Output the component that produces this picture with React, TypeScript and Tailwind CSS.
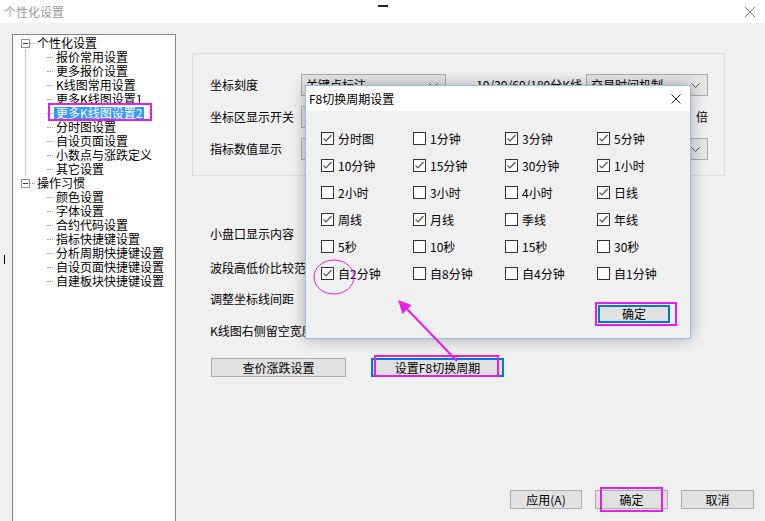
import React from "react";

const tree1 = ["报价常用设置", "更多报价设置", "K线图常用设置", "更多K线图设置1", "更多K线图设置2", "分时图设置", "自设页面设置", "小数点与涨跌定义", "其它设置"];
const tree2 = ["颜色设置", "字体设置", "合约代码设置", "指标快捷键设置", "分析周期快捷键设置", "自设页面快捷键设置", "自建板块快捷键设置"];

const periods: [string, boolean][] = [
  ["分时图", true], ["1分钟", false], ["3分钟", true], ["5分钟", true],
  ["10分钟", true], ["15分钟", true], ["30分钟", true], ["1小时", true],
  ["2小时", false], ["3小时", false], ["4小时", false], ["日线", true],
  ["周线", true], ["月线", true], ["季线", false], ["年线", true],
  ["5秒", false], ["10秒", false], ["15秒", false], ["30秒", false],
  ["自2分钟", true], ["自8分钟", false], ["自4分钟", false], ["自1分钟", false],
];

function Chevron() {
  return (
    <svg width="9" height="5" viewBox="0 0 9 5" className="shrink-0">
      <polyline points="0.5,0.5 4.5,4.5 8.5,0.5" fill="none" stroke="#555" strokeWidth="1" />
    </svg>
  );
}

function Combo({ text, className }: { text?: string; className: string }) {
  return (
    <div className={`h-[22px] bg-[#e5e5e5] border border-[#acacac] flex items-center justify-between pl-[4px] pr-[7px] ${className}`}>
      <span>{text}</span>
      <Chevron />
    </div>
  );
}

function Check({ on }: { on: boolean }) {
  return (
    <span className="w-[13px] h-[13px] border border-[#333] bg-white flex items-center justify-center shrink-0">
      {on && (
        <svg width="11" height="11" viewBox="0 0 11 11">
          <polyline points="1.5,5.5 4,8 9.5,2" fill="none" stroke="#555" strokeWidth="1.2" />
        </svg>
      )}
    </span>
  );
}

function TreeGroup({ label, items, last }: { label: string; items: string[]; last?: boolean }) {
  return (
    <div>
      <div className="flex items-center h-[14px]">
        <span className="ml-[8px] w-[9px] h-[9px] border border-[#919191] bg-white flex items-center justify-center">
          <span className="w-[5px] h-px bg-[#333]" />
        </span>
        <span className="w-[5px] border-t border-dotted border-[#999]" />
        <span className="ml-[2px]">{label}</span>
      </div>
      <div className={`ml-[12px] border-l border-dotted ${last ? "border-transparent" : "border-[#a0a0a0]"}`}>
        {items.map((t) => (
          <div key={t} className="flex items-center h-[14px]">
            <span className="ml-[21px] w-[6px] border-t border-dotted border-[#999]" />
            {t === "更多K线图设置2" ? (
              <span className="ml-[1px] px-[2px] h-[12px] leading-[12px] bg-[#3399ff] text-white">{t}</span>
            ) : (
              <span className="ml-[3px]">{t}</span>
            )}
          </div>
        ))}
      </div>
    </div>
  );
}

function Btn({ children, className }: { children: React.ReactNode; className: string }) {
  return (
    <div className={`h-[19px] bg-[#e1e1e1] flex items-center justify-center ${className}`}>{children}</div>
  );
}

export default function App() {
  return (
    <div className="w-[765px] h-[521px] relative overflow-hidden bg-[#f0f0f0] text-[12px] leading-[14px] text-black font-['Noto_Sans_CJK_SC','Noto_Sans',sans-serif]">
      {/* title bar */}
      <div className="h-[23px] bg-white flex items-center justify-between pl-[4px] pr-[9px]">
        <span className="text-[#9a9a9a]">个性化设置</span>
        <svg width="12" height="12" viewBox="0 0 12 12">
          <path d="M1 1L11 11M11 1L1 11" stroke="#777" strokeWidth="1" />
        </svg>
      </div>
      <span className="absolute left-[378px] top-[5px] w-[10px] h-[2px] bg-[#222]" />

      <div className="flex h-[498px] pt-[11px] pl-[12px]">
        {/* tree */}
        <div className="w-[164px] h-[495px] shrink-0 bg-white border border-[#828790] pt-[1px]">
          <TreeGroup label="个性化设置" items={tree1} />
          <TreeGroup label="操作习惯" items={tree2} last />
        </div>

        {/* right side */}
        <div className="ml-[16px] flex-1 flex flex-col pt-[19px] pb-[12px] pr-[11px]">
          <div className="w-[533px] h-[123px] border border-[#dcdcdc] pt-[20px] pl-[17px] flex flex-col gap-[10px]">
            <div className="flex items-center h-[22px]">
              <span className="w-[91px]">坐标刻度</span>
              <Combo text="关键点标注" className="w-[145px]" />
              <span className="w-[140px] text-right pr-[4px]">10/30/60/180分K线</span>
              <Combo text="交易时间机制" className="w-[122px]" />
            </div>
            <div className="flex items-center h-[22px]">
              <span className="w-[91px]">坐标区显示开关</span>
              <Combo text="" className="w-[145px]" />
              <span className="w-[262px] text-right">倍</span>
            </div>
            <div className="flex items-center h-[22px]">
              <span className="w-[91px]">指标数值显示</span>
              <Combo text="" className="w-[145px]" />
              <span className="w-[140px]" />
              <Combo text="" className="w-[122px]" />
            </div>
          </div>

          <div className="flex flex-col pl-[18px]">
            <span className="mt-[47px] h-[22px] flex items-center">小盘口显示内容</span>
            <span className="mt-[12px] h-[22px] flex items-center">波段高低价比较范围</span>
            <span className="mt-[9px] h-[22px] flex items-center">调整坐标线间距</span>
            <span className="mt-[10px] h-[22px] flex items-center">K线图右侧留空宽度</span>
          </div>

          <div className="flex gap-[25px] pl-[19px] mt-[16px]">
            <Btn className="w-[135px] border border-[#adadad]">查价涨跌设置</Btn>
            <Btn className="w-[133px] border-2 border-[#0078d7]">设置F8切换周期</Btn>
          </div>

          <div className="mt-auto flex justify-end gap-[13px]">
            <Btn className="w-[72px] border border-[#adadad]">应用(A)</Btn>
            <Btn className="w-[73px] border border-[#adadad]">确定</Btn>
            <Btn className="w-[73px] border border-[#adadad]">取消</Btn>
          </div>
        </div>
      </div>

      {/* F8 dialog */}
      <div className="absolute left-[305px] top-[85px] w-[386px] h-[254px] border border-[#93bde6] bg-[#f0f0f0] shadow-[0_0_14px_rgba(0,0,0,0.3)]">
        <div className="h-[25px] bg-white flex items-center justify-between pl-[3px] pr-[9px]">
          <span>F8切换周期设置</span>
          <svg width="10" height="10" viewBox="0 0 10 10">
            <path d="M0.5 0.5L9.5 9.5M9.5 0.5L0.5 9.5" stroke="#222" strokeWidth="1" />
          </svg>
        </div>
        <div className="pt-[21px] pl-[15px]">
          <div className="grid grid-cols-[92px_92px_92px_92px] gap-y-[14px]">
            {periods.map(([t, on]) => (
              <div key={t} className="flex items-center h-[13px]">
                <Check on={on} />
                <span className="ml-[4px]">{t}</span>
              </div>
            ))}
          </div>
        </div>
        <div className="flex justify-end pr-[20px] mt-[25px]">
          <div className="w-[72px] h-[18px] bg-[#e1e1e1] border-2 border-[#0078d7] flex items-center justify-center">确定</div>
        </div>
      </div>

      {/* annotations */}
      <span className="absolute left-[48px] top-[103px] w-[104px] h-[18px] border-2 border-[#e61ee6]" />
      <span className="absolute left-[595px] top-[302px] w-[82px] h-[24px] border-2 border-[#e61ee6]" />
      <span className="absolute left-[374px] top-[355px] w-[125px] h-[22px] border-2 border-[#e61ee6]" />
      <span className="absolute left-[600px] top-[487px] w-[63px] h-[25px] border-2 border-[#e61ee6]" />
      <svg className="absolute left-0 top-0 pointer-events-none" width="765" height="521">
        <ellipse cx="334" cy="277" rx="20" ry="17" fill="none" stroke="#e61ee6" strokeWidth="1" />
        <line x1="457" y1="361" x2="406" y2="308" stroke="#e61ee6" strokeWidth="2" />
        <polygon points="398,300 411.5,305 402.5,314" fill="#e61ee6" />
      </svg>
      <span className="absolute left-[4px] top-[255px] w-[1px] h-[9px] bg-black" />
    </div>
  );
}
